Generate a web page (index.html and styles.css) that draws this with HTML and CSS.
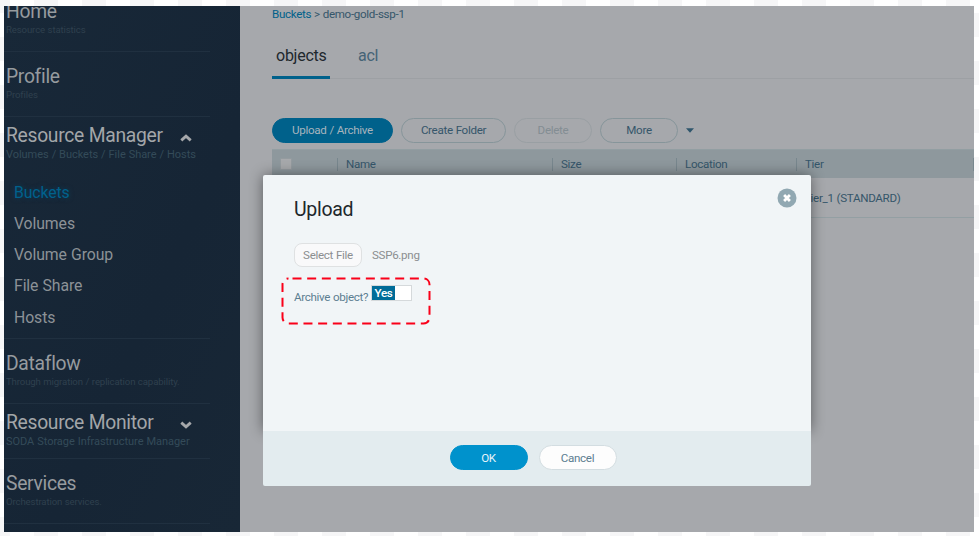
FILE: index.html
```html
<!DOCTYPE html>
<html lang="en">
<head>
<meta charset="utf-8">
<title>Buckets</title>
<link rel="stylesheet" href="styles.css">
</head>
<body>
<div class="app">
  <nav class="sidebar">
    <section class="group home"><h2>Home</h2><p>Resource statistics</p></section>
    <section class="group"><h2>Profile</h2><p>Profiles</p></section>
    <section class="group open manager">
      <h2>Resource Manager</h2><p>Volumes / Buckets / File Share / Hosts</p>
      <svg class="chevron" viewBox="0 0 12 8"><path d="M1.300 6.300 6 2.200l4.700 4.100"/></svg>
      <ul class="links">
        <li class="active">Buckets</li><li>Volumes</li><li>Volume Group</li><li>File Share</li><li>Hosts</li>
      </ul>
    </section>
    <section class="group"><h2>Dataflow</h2><p>Through migration / replication capability.</p></section>
    <section class="group open monitor">
      <h2>Resource Monitor</h2><p>SODA Storage Infrastructure Manager</p>
      <svg class="chevron" viewBox="0 0 12 8"><path d="M1.300 1.700 6 5.800l4.700-4.100"/></svg>
    </section>
    <section class="group"><h2>Services</h2><p>Orchestration services.</p></section>
  </nav>
  <main class="main">
    <div class="crumbs"><a>Buckets</a> &gt; demo-gold-ssp-1</div>
    <div class="tabs"><span class="tab selected">objects</span><span class="tab">acl</span></div>
    <div class="toolbar">
      <button class="btn primary">Upload / Archive</button>
      <button class="btn folder">Create Folder</button>
      <button class="btn delete">Delete</button>
      <button class="btn more">More</button>
      <svg class="caret" viewBox="0 0 8 5"><path d="M0 .3h8L4 4.700z"/></svg>
    </div>
    <div class="row head">
      <span class="check"><i></i></span><span>Name</span><span>Size</span><span>Location</span><span>Tier</span><span></span>
    </div>
    <div class="row item"><span></span><span></span><span></span><span></span><span class="tier">Tier_1 (STANDARD)</span><span></span></div>
  </main>
</div>
<div class="dialog">
  <div class="dialog-body">
    <h1>Upload</h1>
    <div class="file"><button class="select">Select File</button><span>SSP6.png</span></div>
    <div class="archive"><label>Archive object?</label><span class="switch"><b>Yes</b></span></div>
    <svg class="close" viewBox="0 0 20 20"><circle cx="10" cy="10" r="9.500"/><path d="m7.100 7.100 5.800 5.800m0-5.800-5.800 5.800"/></svg>
    <svg class="outline" viewBox="0 0 150 48"><rect x="1.500" y="1.500" width="147" height="45" rx="6"/></svg>
  </div>
  <div class="dialog-foot"><button class="btn ok">OK</button><button class="btn cancel">Cancel</button></div>
</div>
</body>
</html>
```
FILE: styles.css
```css
* { box-sizing: border-box; }
body {
  display: flow-root; margin: 0; width: 979px; height: 536px; overflow: hidden; position: relative;
  font-family: Roboto, "Liberation Sans", sans-serif; font-size: 11.600px; letter-spacing: -.31px; word-spacing: .3px;
  background: conic-gradient(#f6f6f7 25%, #fff 0 50%, #f6f6f7 0 75%, #fff 0) 10px -11px / 48px 48px;
}
h1, h2, p, ul { margin: 0; padding: 0; font-weight: 400; list-style: none; }
button { font: inherit; letter-spacing: inherit; word-spacing: inherit; padding: 0; }
.app { display: flex; width: 970px; height: 526px; margin: 6px 0 0 4px; overflow: hidden; background: #a6a8ac; }

.sidebar { width: 236px; flex: none; background: linear-gradient(115deg, #182838, #162535 60%, #182736); }
.group { width: 206px; height: 65px; padding: 13px 0 0 2px; border-bottom: 1px solid #203040; position: relative; }
.group h2 { font-size: 19.300px; line-height: 24px; letter-spacing: -.3px; color: #969b9f; white-space: nowrap; }
.group p { font-size: 9.600px; line-height: 12px; letter-spacing: -.12px; color: #2f404e; white-space: nowrap; }
.home { height: 53px; padding-top: 1px; margin-top: -7px; }
.open { padding-top: 7px; height: 55px; }
.open h2 { color: #a3a6a9; }
.open p { font-size: 11px; line-height: 14px; letter-spacing: -.04px; color: #344b59; }
.manager { height: 222px; }
.chevron { position: absolute; left: 176px; top: 17px; width: 12px; height: 8px; fill: none; stroke: #a6a8ab; stroke-width: 2.900; }
.links { margin-top: 14.600px; padding-left: 8px; font-size: 15.800px; letter-spacing: -.1px; line-height: 31.300px; color: #8c9297; }
.links .active { color: #00618c; text-shadow: 0 0 5px rgba(0,80,122,.6); }

.main { flex: 1; padding-left: 32px; color: #35566a; min-width: 0; }
.crumbs { height: 27px; line-height: 16px; }
.crumbs a { color: #00618a; }
.tabs { display: flex; height: 46px; border-bottom: 1px solid #9da0a4; font-size: 16px; letter-spacing: -.25px; line-height: 45px; }
.tab { padding: 0 4px; margin-right: 24px; height: 46px; color: #456376; }
.selected { color: #20272d; border-bottom: 3px solid #00618b; width: 58px; }
.toolbar { display: flex; align-items: center; margin-top: 38px; height: 26px; }
.btn { height: 25px; border-radius: 13px; border: 1px solid #86959a; background: none; color: #35566a; }
.primary { width: 121px; background: #00618b; border-color: #00618b; color: #a6b4bd; }
.folder { width: 105px; margin-left: 8px; }
.delete { width: 78px; margin-left: 8px; color: #838d93; border-color: #999fa3; }
.more { width: 78px; margin-left: 8px; }
.caret { width: 8px; height: 5px; margin-left: 8px; fill: #2f566c; }
.row { display: grid; grid-template-columns: 65px 215px 124px 120px 177px 1px; align-items: center; }
.head { height: 29px; margin-top: 6px; background: #8e989d; border-top: 1px solid #929ea2; }
.head span { padding-left: 8px; height: 13px; line-height: 13px; border-left: 1px solid #78878e; }
.head span:last-child { padding: 0; }
.head .check { border: 0; }
.check i { display: block; width: 12px; height: 12px; border: 1px solid #949b9f; background: #a7a9ac; border-radius: 1px; }
.item { height: 40px; border-bottom: 1px solid #939fa3; }
.tier { padding-left: 8px; }

.dialog { position: absolute; left: 263px; top: 175px; width: 548px; height: 311px; border-radius: 2px; color: #5c7e91; }
.dialog-body { position: relative; height: 256px; padding: 23px 31px; background: #f1f5f7; border-radius: 2px 2px 0 0; box-shadow: 0 0 14px rgba(0,0,0,.45); }
.dialog h1 { font-size: 19.500px; line-height: 24px; letter-spacing: -.3px; color: #20272b; }
.file { display: flex; align-items: center; margin-top: 20px; height: 25px; color: #8b8e90; }
.select { width: 68px; height: 24px; border: 1px solid #dfe1e2; border-radius: 8px; background: #f9f9fa; color: #8b8e90; }
.file span { margin-left: 10px; }
.archive { display: flex; margin-top: 18px; height: 24px; }
.archive label { line-height: 25px; width: 77px; white-space: nowrap; }
.switch { width: 41px; height: 16px; border: 1px solid #d5d9db; background: #fff; }
.switch b { display: block; width: 23px; height: 14px; background: #006c98; color: #fff; line-height: 15px; text-align: center; font-weight: 500; }
.close { position: absolute; left: 514px; top: 13px; width: 20px; height: 20px; fill: #91a8b2; }
.close path { stroke: #fff; stroke-width: 2.800; }
.outline { position: absolute; left: 18px; top: 102px; width: 150px; height: 48px; fill: none; stroke: #fa0019; stroke-width: 2; stroke-dasharray: 9 5.670; stroke-dashoffset: -4; }
.dialog-foot { position: relative; display: flex; justify-content: center; gap: 11px; height: 55px; padding: 14px 8px 0 0; background: #e3ecef; border-radius: 0 0 2px 2px; }
.ok { width: 78px; background: #0092cc; border-color: #0092cc; color: #e6f4fa; }
.cancel { width: 78px; background: #fdfdfd; border-color: #d3dde1; color: #5c7e91; }
```
